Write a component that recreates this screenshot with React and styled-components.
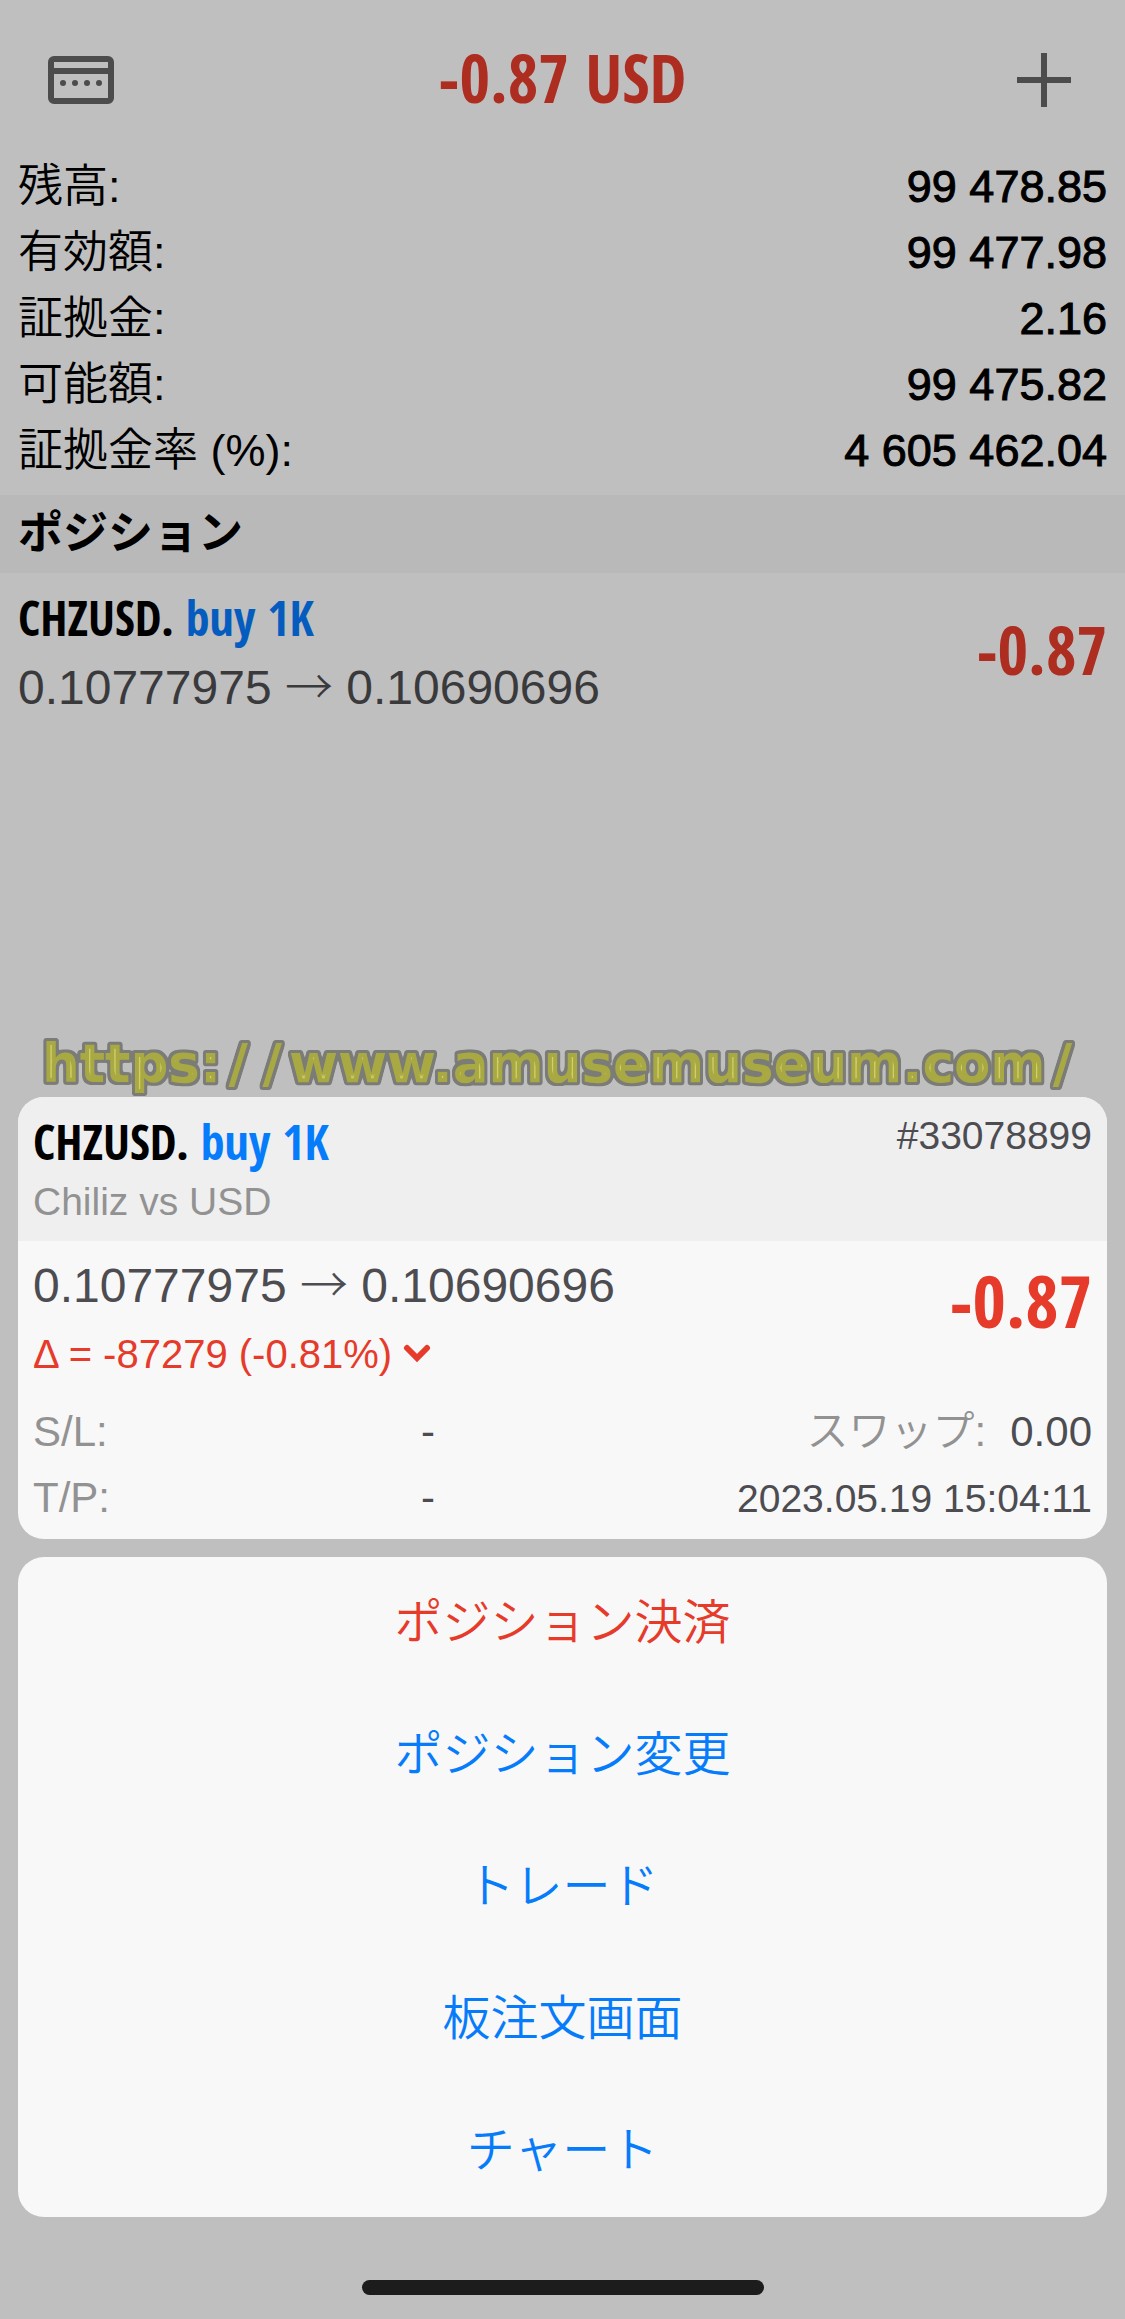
import React from "react";
import styled, { createGlobalStyle } from "styled-components";

const sans = `"Liberation Sans", "Noto Sans CJK JP", sans-serif`;
const condensed = `"Open Sans Condensed", "Roboto Condensed", sans-serif`;

const color = {
  backdrop: "#bfbfbf",
  band: "#b9b9b9",
  icon: "#4c4c4c",
  dimRed: "#ad2d21",
  dimBlue: "#055cbf",
  dimText: "#3a3a3d",
  red: "#e63b2a",
  blue: "#067cfb",
  text: "#4c4c51",
  muted: "#929292",
  card: "#f8f8f8",
  cardHead: "#efeff0",
};

const GlobalStyle = createGlobalStyle`
  *, *::before, *::after { box-sizing: border-box; }
  body {
    margin: 0;
    background: ${color.backdrop};
    color: #000;
    font-family: ${sans};
  }
  button {
    margin: 0;
    padding: 0;
    border: 0;
    background: none;
    font: inherit;
    cursor: pointer;
  }
`;

const Screen = styled.div`
  display: flex;
  flex-direction: column;
  min-height: 100vh;
`;

const TopBar = styled.header`
  display: grid;
  grid-template-columns: 66px 1fr 66px;
  padding: 50px 48px 44px;
`;

const IconButton = styled.button`
  display: flex;
  align-items: center;
  justify-content: center;
  height: 60px;
  color: ${color.icon};
`;

const Total = styled.h1`
  margin: 0;
  text-align: center;
  font: 700 66px/54px ${condensed};
  color: ${color.dimRed};
`;

const Stats = styled.dl`
  margin: 0;
  padding: 0 18px 11px;
`;

const StatRow = styled.div`
  display: flex;
  justify-content: space-between;
  font-size: 45px;
  line-height: 66px;
`;

const StatLabel = styled.dt`
  font-weight: 350;
`;

const StatValue = styled.dd`
  margin: 0;
  -webkit-text-stroke: 1px currentColor;
`;

const SectionTitle = styled.h2`
  margin: 0;
  padding: 0 18px;
  background: ${color.band};
  font-size: 45px;
  font-weight: 700;
  line-height: 78px;
`;

const Position = styled.section`
  display: flex;
  justify-content: space-between;
  align-items: flex-start;
  padding: 13px 18px;
`;

const Symbol = styled.div`
  font: 700 48px/64px ${condensed};
  color: #000;
`;

const Side = styled.span`
  color: ${(p) => (p.$dim ? color.dimBlue : color.blue)};
`;

const Price = styled.div`
  font-size: 48px;
  line-height: ${(p) => (p.$dim ? 76 : 64)}px;
  color: ${(p) => (p.$dim ? color.dimText : color.text)};
`;

const Arrow = styled.span`
  font-family: "Noto Sans CJK JP", sans-serif;
  font-weight: 300;
  line-height: 1;
`;

const Profit = styled.div`
  font-family: ${condensed};
  font-weight: 700;
  font-size: ${(p) => (p.$dim ? 66 : 72)}px;
  line-height: ${(p) => (p.$dim ? 126 : 92)}px;
  color: ${(p) => (p.$dim ? color.dimRed : color.red)};
`;

const SiteMark = styled.p`
  margin: auto 0 2px;
  padding-left: 42px;
  font: 700 53px/62px "DejaVu Sans", sans-serif;
  white-space: nowrap;
  color: #a9a944;
  filter: url(#mark-outline);
`;

const Slash = styled.span`
  display: inline-block;
  width: 34px;
  text-align: center;
`;

const HiddenDefs = styled.svg`
  position: absolute;
`;

const Sheet = styled.div`
  display: flex;
  flex-direction: column;
  gap: 18px;
  padding: 0 18px;
`;

const Card = styled.section`
  overflow: hidden;
  border-radius: 26px;
  background: ${color.card};
`;

const CardHead = styled.header`
  display: flex;
  justify-content: space-between;
  align-items: flex-start;
  padding: 13px 15px 11px;
  background: ${color.cardHead};
`;

const Description = styled.div`
  font-size: 39px;
  line-height: 56px;
  color: ${color.muted};
`;

const Ticket = styled.div`
  font-size: 39px;
  line-height: 52px;
  color: ${color.text};
`;

const CardBody = styled.div`
  padding: 13px 15px 7px;
`;

const Quote = styled.div`
  display: flex;
  justify-content: space-between;
  align-items: flex-start;
  margin-bottom: 9px;
`;

const Delta = styled.div`
  display: flex;
  align-items: center;
  gap: 11px;
  font-size: 40px;
  line-height: 72px;
  color: ${color.red};
`;

const Detail = styled.div`
  display: grid;
  grid-template-columns: 388px 1fr auto;
  align-items: baseline;
  font-size: 42px;
  line-height: 66px;
  color: ${color.text};
`;

const Muted = styled.span`
  font-weight: 350;
  color: ${color.muted};
`;

const Swap = styled.span`
  display: flex;
  gap: 24px;
`;

const Opened = styled.time`
  font-size: 39px;
`;

const Actions = styled.nav`
  display: flex;
  flex-direction: column;
  border-radius: 26px;
  background: ${color.card};
`;

const Action = styled.button`
  height: 132px;
  font-size: 48px;
  font-weight: 350;
  line-height: 132px;
  color: ${(p) => (p.$danger ? color.red : color.blue)};
`;

const HomeIndicator = styled.div`
  width: 402px;
  height: 15px;
  margin: 63px auto 24px;
  border-radius: 8px;
  background: #1c1c1c;
`;

const stats = [
  ["残高:", "99 478.85"],
  ["有効額:", "99 477.98"],
  ["証拠金:", "2.16"],
  ["可能額:", "99 475.82"],
  ["証拠金率 (%):", "4 605 462.04"],
];

const actions = ["ポジション決済", "ポジション変更", "トレード", "板注文画面", "チャート"];

const AccountIcon = () => (
  <svg width="66" height="48" viewBox="0 0 66 48" fill="currentColor" aria-hidden="true">
    <rect x="3" y="3" width="60" height="42" rx="3" fill="none" stroke="currentColor" strokeWidth="6" />
    <rect x="3" y="12" width="60" height="6" />
    {[15, 27, 39, 51].map((x) => (
      <circle key={x} cx={x} cy="27" r="3" />
    ))}
  </svg>
);

const PlusIcon = () => (
  <svg width="54" height="54" viewBox="0 0 54 54" fill="currentColor" aria-hidden="true">
    <path d="M24 0h6v24h24v6H30v24h-6V30H0v-6h24z" />
  </svg>
);

const ChevronIcon = () => (
  <svg width="28" height="20" viewBox="0 0 28 20" aria-hidden="true">
    <path d="M4 4l10 10L24 4" fill="none" stroke="currentColor" strokeWidth="6" strokeLinecap="round" />
  </svg>
);

const PriceMove = ({ dim }) => (
  <Price $dim={dim}>
    0.10777975 <Arrow>→</Arrow> 0.10690696
  </Price>
);

export default function App() {
  return (
    <Screen>
      <GlobalStyle />
      <HiddenDefs width="0" height="0" aria-hidden="true">
        <filter id="mark-outline" colorInterpolationFilters="sRGB">
          <feMorphology in="SourceAlpha" operator="dilate" radius="2" result="wide" />
          <feGaussianBlur in="wide" stdDeviation="1" result="soft" />
          <feComponentTransfer in="soft" result="edge">
            <feFuncA type="linear" slope="5" intercept="-0.5" />
          </feComponentTransfer>
          <feFlood floodColor="#7b7b78" />
          <feComposite in2="edge" operator="in" result="outline" />
          <feMorphology in="SourceAlpha" operator="erode" radius="4" result="core" />
          <feFlood floodColor="#d0d066" />
          <feComposite in2="core" operator="in" result="light" />
          <feMerge>
            <feMergeNode in="outline" />
            <feMergeNode in="SourceGraphic" />
            <feMergeNode in="light" />
          </feMerge>
        </filter>
      </HiddenDefs>

      <TopBar>
        <IconButton aria-label="口座"><AccountIcon /></IconButton>
        <Total>-0.87 USD</Total>
        <IconButton aria-label="新規注文"><PlusIcon /></IconButton>
      </TopBar>

      <Stats>
        {stats.map(([label, value]) => (
          <StatRow key={label}>
            <StatLabel>{label}</StatLabel>
            <StatValue>{value}</StatValue>
          </StatRow>
        ))}
      </Stats>

      <SectionTitle>ポジション</SectionTitle>
      <Position>
        <div>
          <Symbol>CHZUSD. <Side $dim>buy 1K</Side></Symbol>
          <PriceMove dim />
        </div>
        <Profit $dim>-0.87</Profit>
      </Position>

      <SiteMark>
        https:<Slash>/</Slash><Slash>/</Slash>www.amusemuseum.com<Slash>/</Slash>
      </SiteMark>

      <Sheet>
        <Card>
          <CardHead>
            <div>
              <Symbol>CHZUSD. <Side>buy 1K</Side></Symbol>
              <Description>Chiliz vs USD</Description>
            </div>
            <Ticket>#33078899</Ticket>
          </CardHead>
          <CardBody>
            <Quote>
              <div>
                <PriceMove />
                <Delta>Δ = -87279 (-0.81%)<ChevronIcon /></Delta>
              </div>
              <Profit>-0.87</Profit>
            </Quote>
            <Detail>
              <Muted>S/L:</Muted>
              <span>-</span>
              <Swap><Muted>スワップ:</Muted><span>0.00</span></Swap>
            </Detail>
            <Detail>
              <Muted>T/P:</Muted>
              <span>-</span>
              <Opened>2023.05.19 15:04:11</Opened>
            </Detail>
          </CardBody>
        </Card>
        <Actions>
          {actions.map((label, i) => (
            <Action key={label} $danger={i === 0}>{label}</Action>
          ))}
        </Actions>
      </Sheet>
      <HomeIndicator />
    </Screen>
  );
}
